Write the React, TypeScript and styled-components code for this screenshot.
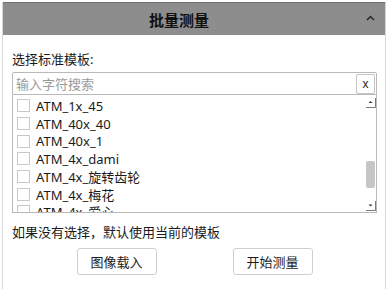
import React from 'react';
import styled, { createGlobalStyle } from 'styled-components';

const GlobalStyle = createGlobalStyle`
  html, body {
    margin: 0;
    padding: 0;
    background: #ffffff;
  }
  body {
    font-family: "Noto Sans", "Noto Sans CJK SC", sans-serif;
    color: #1e1e1e;
  }
`;

const cjk = `"Noto Sans", "Noto Sans CJK SC", sans-serif`;

const Panel = styled.section`
  box-sizing: border-box;
  width: 384px;
  height: 287px;
  margin: 2px 0 0 2px;
  border-left: 1px solid #d6d6d6;
  border-right: 1px solid #d6d6d6;
  display: flex;
  flex-direction: column;
`;

const Header = styled.header`
  height: 33px;
  background: #8d8d8d;
  border-top: 1px solid #6f6f6f;
  box-sizing: border-box;
  display: flex;
  align-items: center;
`;

const Title = styled.h2`
  flex: 1;
  margin: 0;
  text-align: center;
  font-family: ${cjk};
  font-size: 15px;
  font-weight: 700;
  color: #111;
`;

const Collapse = styled.div`
  width: 30px;
  display: flex;
  justify-content: center;
  align-items: center;
  padding-bottom: 2px;
`;

const Body = styled.div`
  padding: 15px 8px 0 9px;
  display: flex;
  flex-direction: column;
`;

const Label = styled.div`
  font-family: ${cjk};
  font-size: 13px;
  line-height: 18px;
  height: 18px;
  color: #1a1a1a;
`;

const SearchBox = styled.div`
  box-sizing: border-box;
  margin-top: 4px;
  width: 365px;
  height: 23px;
  border: 1px solid #b9b9b9;
  border-radius: 2px 2px 0 0;
  display: flex;
  align-items: center;
  padding: 0 1px 0 3px;
`;

const SearchInput = styled.input`
  flex: 1;
  border: none;
  outline: none;
  padding: 0;
  font-family: ${cjk};
  font-size: 13px;
  color: #222;
  background: transparent;
  &::placeholder {
    color: #9a9a9a;
  }
`;

const ClearButton = styled.button`
  box-sizing: border-box;
  width: 19px;
  height: 20px;
  padding: 0;
  border: 1px solid #c4c4c4;
  border-radius: 2px;
  background: #fff;
  font-family: "Liberation Sans", sans-serif;
  font-size: 12px;
  color: #222;
  line-height: 16px;
`;

const ListBox = styled.div`
  box-sizing: border-box;
  width: 365px;
  height: 118px;
  border: 1px solid #b9b9b9;
  border-top: none;
  display: flex;
  overflow: hidden;
`;

const Items = styled.div`
  flex: 1;
  overflow: hidden;
  padding-top: 2px;
`;

const Row = styled.div`
  height: 17.7px;
  display: flex;
  align-items: center;
  padding-left: 4px;
`;

const Check = styled.span`
  box-sizing: border-box;
  width: 13px;
  height: 13px;
  border: 1px solid #c9c9c9;
  background: #fff;
  margin-right: 6px;
  flex: none;
`;

const ItemText = styled.span`
  font-family: ${cjk};
  font-size: 13px;
  color: #1a1a1a;
  white-space: nowrap;
`;

const ScrollBar = styled.div`
  width: 12px;
  display: flex;
  flex-direction: column;
  align-items: center;
  padding: 1px 0;
`;

const Arrow = styled.div`
  width: 11px;
  height: 12px;
  display: flex;
  align-items: center;
  justify-content: center;
`;

const Track = styled.div`
  flex: 1;
  width: 100%;
  display: flex;
  justify-content: center;
`;

const Thumb = styled.div<{ $top: number; $size: number }>`
  width: 9px;
  height: ${(p) => p.$size}px;
  margin-top: ${(p) => p.$top}px;
  background: #c6c6c6;
  border-radius: 2px;
`;

const Hint = styled.div`
  margin-top: 10px;
  font-family: ${cjk};
  font-size: 13px;
  line-height: 18px;
  color: #1a1a1a;
`;

const Actions = styled.div`
  margin-top: 7px;
  display: flex;
  justify-content: center;
  gap: 76px;
`;

const Button = styled.button`
  box-sizing: border-box;
  width: 80px;
  height: 27px;
  border: 1px solid #cfcfcf;
  border-radius: 3px;
  background: #fff;
  font-family: ${cjk};
  font-size: 13px;
  color: #1a1a1a;
  padding: 0;
`;

const templates = [
  'ATM_1x_45',
  'ATM_40x_40',
  'ATM_40x_1',
  'ATM_4x_dami',
  'ATM_4x_旋转齿轮',
  'ATM_4x_梅花',
  'ATM_4x_爱心',
];

const ArrowIcon: React.FC<{ down?: boolean }> = ({ down }) => (
  <svg width="11" height="11" viewBox="0 0 11 11">
    <path d="M10.5 1 V10.5 H1" fill="none" stroke="#7a7a7a" strokeWidth="1" />
    {down ? (
      <path d="M3.5 4.5 H7.5 L5.5 6.5 Z" fill="#333" />
    ) : (
      <path d="M3.5 6 H7.5 L5.5 4 Z" fill="#333" />
    )}
  </svg>
);

const App: React.FC = () => (
  <>
    <GlobalStyle />
    <Panel>
      <Header>
        <Title>批量测量</Title>
        <Collapse>
          <svg width="9" height="6" viewBox="0 0 9 6">
            <path d="M1 5 L4.5 1.5 L8 5" fill="none" stroke="#222" strokeWidth="1.4" />
          </svg>
        </Collapse>
      </Header>
      <Body>
        <Label>选择标准模板:</Label>
        <SearchBox>
          <SearchInput placeholder="输入字符搜索" />
          <ClearButton>x</ClearButton>
        </SearchBox>
        <ListBox>
          <Items>
            {templates.map((t) => (
              <Row key={t}>
                <Check />
                <ItemText>{t}</ItemText>
              </Row>
            ))}
          </Items>
          <ScrollBar>
            <Arrow>
              <ArrowIcon />
            </Arrow>
            <Track>
              <Thumb $top={53} $size={27} />
            </Track>
            <Arrow>
              <ArrowIcon down />
            </Arrow>
          </ScrollBar>
        </ListBox>
        <Hint>如果没有选择，默认使用当前的模板</Hint>
        <Actions>
          <Button>图像载入</Button>
          <Button>开始测量</Button>
        </Actions>
      </Body>
    </Panel>
  </>
);

export default App;
